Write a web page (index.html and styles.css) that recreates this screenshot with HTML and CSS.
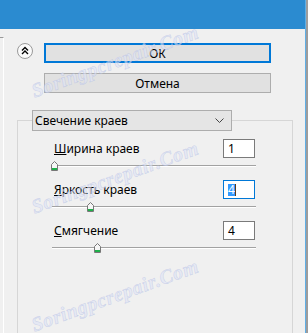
FILE: index.html
```html
<!DOCTYPE html>
<html lang="ru">
<head>
<meta charset="UTF-8">
<title>Свечение краев</title>
<link rel="stylesheet" href="styles.css">
</head>
<body>
<div class="window">
    <div class="titlebar"></div>
    <div class="main">
        <div class="edge"></div>
        <div class="panel">
            <div class="actions">
                <button class="collapse" type="button">
                    <svg width="16" height="16" viewBox="0 0 16 16">
                        <circle cx="8" cy="8" r="7.5" fill="#fafafa" stroke="#9a9a9a"/>
                        <polyline points="5,7.5 8,4.5 11,7.5" fill="none" stroke="#000" stroke-width="1.4"/>
                        <polyline points="5,11 8,8 11,11" fill="none" stroke="#000" stroke-width="1.4"/>
                    </svg>
                </button>
                <div class="buttons">
                    <button class="btn btn-default" type="button">ОК</button>
                    <button class="btn" type="button">Отмена</button>
                </div>
            </div>
            <fieldset class="group">
                <legend>
                    <div class="select">
                        <span>Свечение краев</span>
                        <svg width="9" height="5" viewBox="0 0 9 5">
                            <polyline points="0.5,0.5 4.5,4.5 8.5,0.5" fill="none" stroke="#444"/>
                        </svg>
                    </div>
                </legend>
                <div class="params">
                    <div class="param">
                        <div class="param-head">
                            <label><u>Ш</u>ирина краев</label>
                            <div class="field">1</div>
                        </div>
                        <div class="slider">
                            <div class="track"></div>
                            <span class="thumb" style="left: -1px"><svg width="7" height="10" viewBox="0 0 7 10"><path d="M3.5 0.5 L6.5 3.5 V9.5 H0.5 V3.5 Z" fill="#f6f6f6" stroke="#777"/><rect x="1" y="7" width="5" height="2" fill="#1fb04a"/></svg></span>
                        </div>
                    </div>
                    <div class="param">
                        <div class="param-head">
                            <label><u>Я</u>ркость краев</label>
                            <div class="field focus"><span class="sel">4</span><span class="caret"></span></div>
                        </div>
                        <div class="slider">
                            <div class="track"></div>
                            <span class="thumb" style="left: 35px"><svg width="7" height="10" viewBox="0 0 7 10"><path d="M3.5 0.5 L6.5 3.5 V9.5 H0.5 V3.5 Z" fill="#f6f6f6" stroke="#777"/><rect x="1" y="7" width="5" height="2" fill="#1fb04a"/></svg></span>
                        </div>
                    </div>
                    <div class="param">
                        <div class="param-head">
                            <label><u>С</u>мягчение</label>
                            <div class="field">4</div>
                        </div>
                        <div class="slider">
                            <div class="track"></div>
                            <span class="thumb" style="left: 42px"><svg width="7" height="10" viewBox="0 0 7 10"><path d="M3.5 0.5 L6.5 3.5 V9.5 H0.5 V3.5 Z" fill="#f6f6f6" stroke="#777"/><rect x="1" y="7" width="5" height="2" fill="#1fb04a"/></svg></span>
                        </div>
                    </div>
                </div>
            </fieldset>
        </div>
    </div>
    <div class="watermark">
        <span class="mark mark-1">Soringpcrepair.Com</span>
        <span class="mark mark-2">Soringpcrepair.Com</span>
        <span class="mark mark-3">Soringpcrepair.Com</span>
    </div>
</div>
</body>
</html>
```

FILE: styles.css
```css
body {
    margin: 0;
    background: #9d9d9d;
    font-family: 'Noto Sans', sans-serif;
    font-size: 12px;
    color: #000;
}
.window {
    position: relative;
    width: 305px;
    height: 333px;
    border-right: 1px solid #5eaee6;
    background: #f0f0f0;
    display: flex;
    flex-direction: column;
    overflow: hidden;
}
.titlebar {
    flex: none;
    height: 29px;
    background: #2b8bd0;
}
.main {
    flex: 1;
    display: flex;
}
.edge {
    width: 3px;
    margin-top: 8px;
    border-top: 1px solid #9a9a9a;
    border-right: 1px solid #fff;
}
.panel {
    flex: 1;
    padding-top: 14px;
}
.actions {
    display: flex;
    align-items: flex-start;
    gap: 11px;
    padding-left: 13px;
}
.collapse {
    width: 16px;
    height: 16px;
    padding: 0;
    border: none;
    background: none;
    display: block;
}
.collapse svg {
    display: block;
}
.buttons {
    display: flex;
    flex-direction: column;
    gap: 10px;
    width: 227px;
}
.btn {
    height: 20px;
    box-sizing: border-box;
    padding: 0;
    border: 1px solid #adadad;
    background: #e1e1e1;
    font: inherit;
    color: #000;
}
.btn-default {
    border: 2px solid #0078d7;
}
.group {
    box-sizing: border-box;
    width: 276px;
    height: 260px;
    margin: 17px 0 0 13px;
    padding: 0 0 0 14px;
    border: 1px solid #d6d6d6;
    min-width: 0;
}
.group legend {
    padding: 0;
}
.select {
    box-sizing: border-box;
    width: 200px;
    height: 21px;
    border: 1px solid #adadad;
    background: #e5e5e5;
    display: flex;
    align-items: center;
    justify-content: space-between;
    padding: 0 7px 0 2px;
}
.select svg {
    display: block;
}
.params {
    width: 204px;
    margin-left: 20px;
}
.param {
    margin-top: 8px;
}
.param-head {
    display: flex;
    align-items: center;
    justify-content: space-between;
    height: 19px;
    padding: 0 1px 0 2px;
}
.field {
    box-sizing: border-box;
    width: 32px;
    height: 19px;
    border: 1px solid #7a7a7a;
    background: #fff;
    padding-left: 4px;
    line-height: 17px;
    display: flex;
    align-items: center;
}
.field.focus {
    border-color: #0078d7;
}
.sel {
    background: #3399ff;
    color: #fff;
    line-height: 12px;
}
.caret {
    width: 1px;
    height: 12px;
    background: #5a3a1a;
}
.slider {
    position: relative;
    height: 14px;
}
.track {
    position: relative;
    top: 7px;
    height: 1px;
    background: #a2a2a2;
    border-bottom: 1px solid #fff;
}
.thumb {
    position: absolute;
    top: 3px;
    display: block;
}
.thumb svg {
    display: block;
}
.watermark {
    position: absolute;
    inset: 0;
    pointer-events: none;
}
.mark {
    position: absolute;
    left: 15px;
    width: 200px;
    text-align: center;
    font-family: 'Liberation Serif', serif;
    font-weight: bold;
    font-style: italic;
    font-size: 20px;
    letter-spacing: 0.5px;
    color: rgba(222, 227, 246, 0.6);
    -webkit-text-stroke: 0.5px rgba(160, 174, 220, 0.45);
    transform: rotate(-20deg);
}
.mark-1 {
    top: 50px;
}
.mark-2 {
    top: 166px;
}
.mark-3 {
    top: 284px;
}
```
